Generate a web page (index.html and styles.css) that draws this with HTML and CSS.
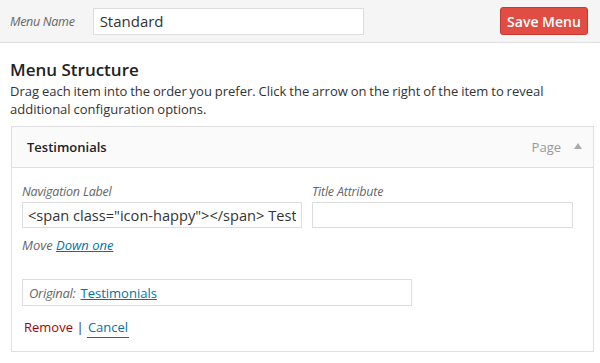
FILE: index.html
```html
<!DOCTYPE html>
<html lang="en">
<head>
    <meta charset="UTF-8">
    <title>Menus</title>
    <link rel="stylesheet" href="styles.css">
</head>
<body>
    <div class="menu-header">
        <label class="menu-name-label" for="menuName">Menu Name</label>
        <input type="text" id="menuName" class="menu-name" value="Standard">
        <button class="btn-save">Save Menu</button>
    </div>
    <div class="menu-body">
        <h2>Menu Structure</h2>
        <p class="hint">Drag each item into the order you prefer. Click the arrow on the right of the item to reveal additional configuration options.</p>

        <div class="menu-item">
            <div class="item-bar">
                <span class="item-title">Testimonials</span>
                <span class="item-type">Page</span>
                <span class="item-arrow"></span>
            </div>
            <div class="item-settings">
                <div class="field-row">
                    <div class="field field-label">
                        <label>Navigation Label</label>
                        <input type="text" value="&lt;span class=&quot;icon-happy&quot;&gt;&lt;/span&gt; Testimonials">
                    </div>
                    <div class="field field-title">
                        <label>Title Attribute</label>
                        <input type="text" value="">
                    </div>
                </div>
                <div class="move">Move <a href="#">Down one</a></div>
                <div class="original">
                    <em>Original:</em> <a href="#">Testimonials</a>
                </div>
                <div class="actions">
                    <a href="#" class="remove">Remove</a> <span class="sep">|</span> <a href="#" class="cancel">Cancel</a>
                </div>
            </div>
        </div>
    </div>
</body>
</html>
```

FILE: styles.css
```css
body {
    margin: 0;
    font-family: "Open Sans", sans-serif;
    font-size: 13px;
    color: #333;
    background: #fff;
}
.menu-header {
    display: flex;
    align-items: center;
    height: 42px;
    padding: 0 12px 0 10px;
    background: #f5f5f5;
    border-bottom: 1px solid #dfdfdf;
}
.menu-name-label {
    font-size: 12.5px;
    font-style: italic;
    letter-spacing: -0.3px;
    color: #666;
    margin-right: 18px;
}
.menu-name {
    width: 271px;
    height: 27px;
    box-sizing: border-box;
    border: 1px solid #ddd;
    padding: 0 6px;
    font-family: "Open Sans", sans-serif;
    font-size: 15px;
    color: #333;
    background: #fff;
}
.btn-save {
    margin-left: auto;
    width: 88px;
    height: 28px;
    border: 1px solid #c9382e;
    border-radius: 3px;
    background: #e14d43;
    color: #fff;
    font-family: "Open Sans", sans-serif;
    font-size: 14px;
    font-weight: 600;
    padding: 0;
}
.menu-body {
    padding: 0 6px 0 10px;
}
h2 {
    margin: 15px 0 0;
    font-size: 17px;
    line-height: 24px;
    font-weight: 600;
    color: #222;
}
.hint {
    margin: 0 0 8px;
    line-height: 18px;
    word-spacing: -0.5px;
    color: #333;
}
.menu-item {
    margin-left: 1px;
    border: 1px solid #dfdfdf;
}
.item-bar {
    display: flex;
    align-items: center;
    height: 40px;
    padding: 0 11px 0 15px;
    background: #fafafa;
    border-bottom: 1px solid #dfdfdf;
}
.item-title {
    font-weight: 600;
    color: #222;
}
.item-type {
    margin-left: auto;
    color: #999;
}
.item-arrow {
    margin-left: 13px;
    width: 0;
    height: 0;
    border-left: 4px solid transparent;
    border-right: 4px solid transparent;
    border-bottom: 6px solid #aaa;
    margin-bottom: 2px;
}
.item-settings {
    padding: 15px 20px 15px 10px;
}
.field-row {
    display: flex;
    gap: 10px;
}
.field label {
    display: block;
    font-size: 12.5px;
    font-style: italic;
    letter-spacing: -0.2px;
    color: #666;
    line-height: 18px;
    margin-bottom: 1px;
}
.field input {
    display: block;
    box-sizing: border-box;
    height: 26px;
    border: 1px solid #ddd;
    padding: 0 5px;
    font-family: "Open Sans", sans-serif;
    font-size: 14.6px;
    color: #333;
}
.field-label input {
    width: 280px;
}
.field-title input {
    width: 261px;
}
a {
    color: #0074a2;
}
.move {
    margin-top: 8px;
    font-style: italic;
    color: #666;
    line-height: 18px;
}
.original {
    margin-top: 25px;
    width: 390px;
    height: 27px;
    box-sizing: border-box;
    border: 1px solid #ddd;
    padding: 0 6px;
    display: flex;
    align-items: center;
    gap: 5px;
    color: #666;
}
.original em {
    letter-spacing: -0.3px;
}
.actions {
    margin-top: 12px;
    line-height: 18px;
    padding-left: 2px;
}
.remove {
    color: #a00;
    text-decoration: none;
}
.sep {
    color: #333;
}
.cancel {
    text-decoration: none;
    border-bottom: 1px solid #0074a2;
    padding: 0 1px 1px;
}
```
